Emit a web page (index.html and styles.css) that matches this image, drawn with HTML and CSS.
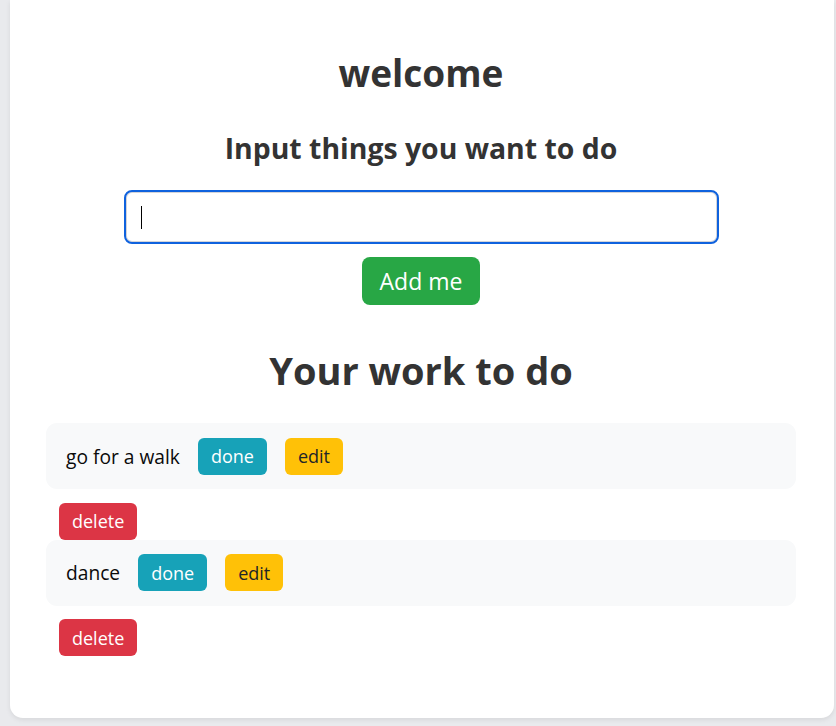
FILE: index.html
```html
<!DOCTYPE html>
<html lang="en">
<head>
<meta charset="utf-8">
<title>Todo</title>
<link rel="stylesheet" href="styles.css">
</head>
<body>
<main class="card">
  <h1 class="title">welcome</h1>
  <h3 class="subtitle">Input things you want to do</h3>
  <div class="input-wrap">
    <input class="todo-input" type="text" aria-label="New todo">
    <span class="caret"></span>
  </div>
  <button class="btn btn-add">Add me</button>
  <h1 class="list-title">Your work to do</h1>
  <ul class="todo-list">
    <li class="todo">
      <div class="todo-row">
        <span class="todo-text">go for a walk</span>
        <button class="btn btn-sm btn-done">done</button>
        <button class="btn btn-sm btn-edit">edit</button>
      </div>
      <button class="btn btn-sm btn-delete">delete</button>
    </li>
    <li class="todo">
      <div class="todo-row">
        <span class="todo-text">dance</span>
        <button class="btn btn-sm btn-done">done</button>
        <button class="btn btn-sm btn-edit">edit</button>
      </div>
      <button class="btn btn-sm btn-delete">delete</button>
    </li>
  </ul>
</main>
</body>
</html>
```
FILE: styles.css
```css
* { box-sizing: border-box; }

html, body {
  margin: 0;
  padding: 0;
}

body {
  background: #e9eaed;
  font-family: "Open Sans", "Noto Sans", sans-serif;
  color: #333;
  padding: 0 2px 8px 10px;
}

.card {
  background: #fff;
  border-radius: 0 0 13px 13px;
  box-shadow: 0 2px 5px rgba(0, 0, 0, 0.08);
  padding: 51px 38px 62px 36px;
  display: flex;
  flex-direction: column;
  align-items: center;
}

.title {
  margin: 0;
  font-size: 37px;
  line-height: 44px;
  font-weight: 700;
  color: #333;
}

.subtitle {
  margin: 36px 0 0;
  font-size: 28.4px;
  line-height: 34px;
  font-weight: 700;
  color: #333;
}

.input-wrap {
  position: relative;
  width: 595px;
  margin-top: 25px;
}

.todo-input {
  display: block;
  width: 100%;
  height: 54px;
  border: 2px solid #0f62de;
  border-radius: 8px;
  box-shadow: inset 0 0 0 1px #d4d4d8;
  outline: none;
  font: inherit;
  padding: 0 16px;
}

.caret {
  position: absolute;
  left: 17px;
  top: 16px;
  width: 1px;
  height: 23px;
  background: #000;
  pointer-events: none;
}

.btn {
  display: inline-flex;
  align-items: center;
  justify-content: center;
  border: 0;
  font-family: inherit;
  cursor: pointer;
}

.btn-add {
  margin-top: 13px;
  width: 118px;
  height: 48px;
  border-radius: 8px;
  background: #28a745;
  color: #fff;
  font-size: 23px;
}

.list-title {
  margin: 42px 0 0;
  font-size: 38px;
  line-height: 46px;
  font-weight: 700;
  color: #333;
}

.todo-list {
  list-style: none;
  margin: 30px 0 0;
  padding: 0;
  align-self: stretch;
  display: flex;
  flex-direction: column;
}

.todo {
  display: flex;
  flex-direction: column;
  align-items: flex-start;
}

.todo-row {
  align-self: stretch;
  display: flex;
  align-items: center;
  gap: 18px;
  height: 66px;
  padding: 0 20px;
  background: #f8f9fa;
  border-radius: 11px;
}

.todo-text {
  font-size: 19.2px;
  color: #0a0a0a;
}

.btn-sm {
  height: 37px;
  padding: 0 13px;
  border-radius: 6px;
  font-size: 18px;
}

.btn-done {
  background: #17a2b8;
  color: #fff;
}

.btn-edit {
  background: #ffc107;
  color: #212529;
}

.btn-delete {
  margin: 13.5px 0 0 13px;
  background: #dc3545;
  color: #fff;
}
```
